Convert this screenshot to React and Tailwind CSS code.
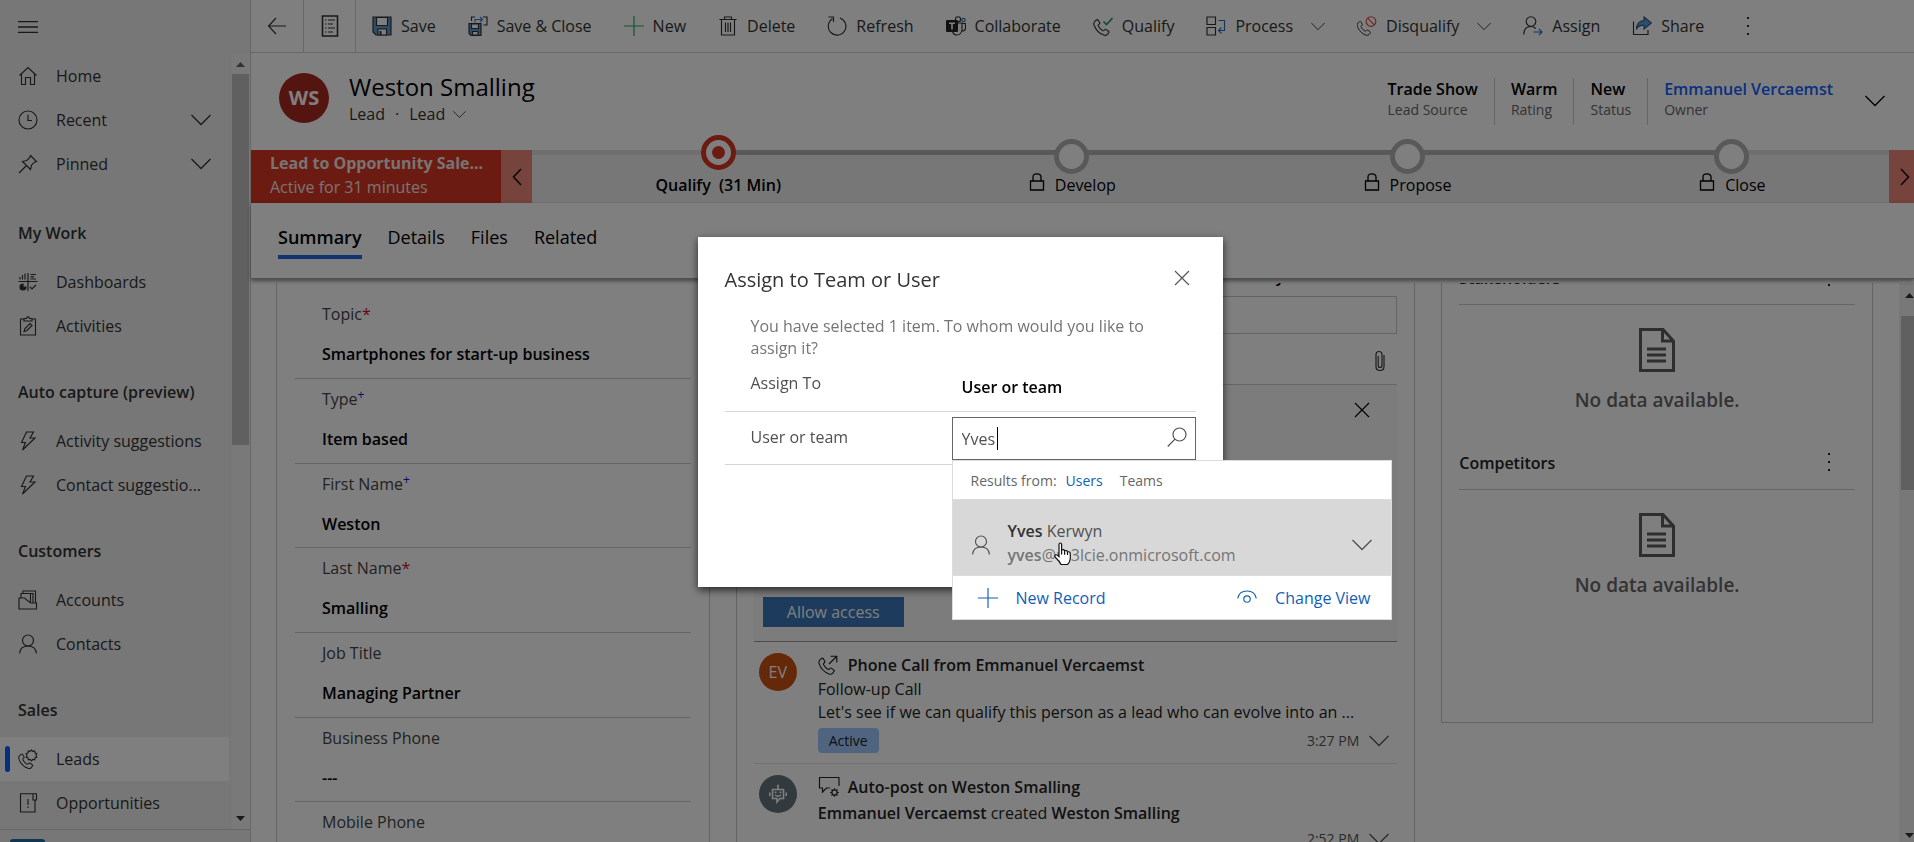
import React from "react";

function Icon({ children, size = 20, className = "", sw = 1.15, box = 20 }) {
  return (
    <svg
      width={size}
      height={size}
      viewBox={`0 0 ${box} ${box}`}
      fill="none"
      stroke="currentColor"
      strokeWidth={sw}
      className={`shrink-0 ${className}`}
      aria-hidden="true"
    >
      {children}
    </svg>
  );
}

const HANDSET =
  "M3.2 3.2 L5 1.8 Q5.8 1.4 6.4 2.2 L8 4.8 Q8.4 5.6 7.8 6.2 L6.8 7.2 Q6.4 7.8 6.8 8.6 Q8.4 11.6 11.2 13.2 Q12 13.6 12.6 13 L13.4 12.2 Q14.2 11.6 15 12.2 L17.4 14 Q18.2 14.6 17.6 15.4 L16.2 17.2 Q14.8 18.8 12.4 18 Q5 15.2 2.2 7.6 Q1.4 5 3.2 3.2 Z";

const icons = {
  home: (
    <Icon>
      <path d="M1.5 9.5 L10 1.5 L18.500 9.5 M3.500 8 V18.500 H7.500 V11.500 H12.500 V18.500 H16.500 V8" />
    </Icon>
  ),
  recent: (
    <Icon>
      <circle cx="10" cy="10" r="9" />
      <path d="M10 4.500 V10.500 H14" />
    </Icon>
  ),
  pinned: (
    <Icon>
      <path d="M12.500 1.500 L18.500 7.500 L16.500 8.200 L13.500 11.200 L12.500 15.500 L4.500 7.500 L8.800 6.500 L11.800 3.500 Z M8.500 11.500 L1 19" />
    </Icon>
  ),
  dashboards: (
    <Icon>
      <path d="M0.500 9.500 H19.500 M10 1 V19" />
      <path d="M2 7.500 V5 M4.500 7.500 V3 M7 7.500 V1.500 M12.500 2.500 H18 M12.500 4.800 H16 M12.500 7 H18" />
      <path d="M5 12 A3 3 0 1 0 8 15 H5 Z" fill="currentColor" />
      <path d="M12 15 L14 17 L18 13" />
    </Icon>
  ),
  activities: (
    <Icon>
      <path d="M6 3 H2.500 V19 H17.500 V3 H14 M6 5 V2.500 H8.500 Q8.500 0.800 10 0.800 Q11.500 0.800 11.500 2.500 H14 V5 Z" />
      <path d="M6 15.500 L7 12.500 L12 7.500 L14 9.500 L9 14.500 Z" />
    </Icon>
  ),
  bolt: (
    <Icon>
      <path d="M8.500 1 H15.500 L12 7 H17 L4.500 19 L7.500 11.500 H3.500 Z" />
    </Icon>
  ),
  accounts: (
    <Icon>
      <path d="M1 19 V8 H6.500 L12.500 13 H18.500 V19 Z M3 8 V3.500 H15 V12.500 M5 3.500 V1 H17.500 V13 M12.500 3.500 V12" />
    </Icon>
  ),
  person: (
    <Icon>
      <circle cx="10" cy="6.500" r="5.500" />
      <path d="M1.500 19.500 Q2.200 12 10 12 Q17.800 12 18.500 19.500" />
    </Icon>
  ),
  leads: (
    <Icon>
      <g transform="translate(-1 3.5) scale(0.88)">
        <path d={HANDSET} />
      </g>
      <path d="M13.500 1 L14.800 2.400 L16.700 2 L17 3.900 L18.800 4.700 L17.900 6.400 L18.800 8.100 L17 8.900 L16.700 10.800 L14.800 10.400 L13.500 11.800 L12.200 10.400 L10.300 10.800 L10 8.900 L8.200 8.100 L9.100 6.400 L8.200 4.700 L10 3.900 L10.300 2 L12.200 2.400 Z" />
    </Icon>
  ),
  opportunities: (
    <Icon>
      <path d="M15 0.700 H2.500 V19 H17 V7.500 M15 0.700 V7 H18.500 V0.700 Z M10 6 V12 M10 13.500 V15" />
    </Icon>
  ),
  save: (
    <Icon>
      <path d="M1 1 H19 V19 H4 L1 16 Z" fill="#5b9bd5" />
      <path d="M4.500 1.500 H15.500 V9.500 H4.500 Z" fill="#fff" />
      <path d="M6 19 V13 H14.500 V19 Z" fill="#fff" />
      <path d="M8.500 15 V19" strokeWidth="2" />
    </Icon>
  ),
  saveClose: (
    <Icon>
      <path d="M1 7.500 H13 V19.500 H3 L1 17.500 Z" fill="#5b9bd5" />
      <path d="M3.500 8 H10.500 V12.500 H3.500 Z M4.500 19 V15.500 H10 V19 Z" fill="#fff" />
      <path d="M3.500 5 V1 H7 M15 1 H19 V9 H15.500" />
      <path d="M7 6.500 V3.500 H14 M12 1 L14.500 3.500 L12 6" stroke="#2b7cd3" />
    </Icon>
  ),
  plus: (
    <Icon>
      <path d="M10 0 V20 M0 10 H20" />
    </Icon>
  ),
  trash: (
    <Icon>
      <path d="M1.500 3.500 H18.500 M6.500 3.500 V1 H13.500 V3.500 M3.500 3.500 V19 H16.500 V3.500 M7.500 6.500 V16 M10 6.500 V16 M12.500 6.500 V16" />
    </Icon>
  ),
  refresh: (
    <Icon>
      <path d="M5.500 2.800 A8.800 8.800 0 1 0 13 2 M1.500 1 H6.500 V6" />
    </Icon>
  ),
  teams: (
    <Icon>
      <circle cx="12" cy="3.300" r="2.600" />
      <circle cx="17.500" cy="4" r="1.700" stroke="#2b6ca8" />
      <path d="M9 7 H16 V14 Q15 19 11 19 Q7.500 19 6.500 15.500 M16 7.500 H19.500 V12.500 Q19 15 16 15" />
      <rect x="0" y="4" width="12" height="12" rx="1" fill="#222" stroke="none" />
      <path d="M3 7.200 H9 M6 7.200 V13.500" stroke="#fff" strokeWidth="1.600" />
    </Icon>
  ),
  qualify: (
    <Icon>
      <g transform="translate(-1 2) scale(0.95)">
        <path d={HANDSET} />
      </g>
      <path d="M10.500 5.500 L13.500 8.500 L19.500 2" stroke="#1e9e54" strokeWidth="1.600" />
    </Icon>
  ),
  process: (
    <Icon>
      <path d="M1 1 H9.500 V8.500 H1 Z M1 11.500 H9.500 V19 H1 Z" />
      <path d="M12.500 4.500 H18.500 V14.500 H12.500 M15.500 11.500 L12.500 14.500 L15.500 17.500" stroke="#2b6cb8" />
    </Icon>
  ),
  disqualify: (
    <Icon>
      <g transform="translate(-1.5 4) scale(0.84)">
        <path d={HANDSET} />
      </g>
      <circle cx="14" cy="5.500" r="4.800" stroke="#e04848" />
      <path d="M10.800 2.200 L17.200 8.800" stroke="#e04848" />
    </Icon>
  ),
  assign: (
    <Icon>
      <circle cx="8" cy="5.500" r="4.800" />
      <path d="M0.700 18.500 Q1 10.500 8 10.500 Q11 10.500 12.800 12.500" />
      <path d="M10.500 16 H19 M15.800 12.800 L19 16 L15.800 19.200" stroke="#2b6cb8" />
    </Icon>
  ),
  share: (
    <Icon>
      <path d="M1.500 5.500 V18.500 H16 V14" />
      <path d="M12 1 L19.500 7 L12 13 V9.500 Q6 9 4.500 13.500 Q4.500 5 12 4.500 Z" fill="#5b9bd5" stroke="#2b5c8a" />
    </Icon>
  ),
  form: (
    <Icon size={22} box={22}>
      <path d="M3.500 1 H18.500 V21 H3.500 Z" strokeWidth="1.600" />
      <path d="M6 5 H7.500 M9 5 H16 M6 9 H7.500 M9 9 H14 M6 13 H7.500 M9 13 H16 M6 17 H7.500 M9 17 H14" />
    </Icon>
  ),
  back: (
    <Icon>
      <path d="M19 10 H1.500 M9 2 L1.500 10 L9 18" />
    </Icon>
  ),
  close: (
    <Icon size={16} box={16}>
      <path d="M1 1 L15 15 M15 1 L1 15" />
    </Icon>
  ),
  lock: (
    <Icon size={18} box={18} sw={1.300}>
      <path d="M2.500 8 H15.500 V17 H2.500 Z M5 8 V4 Q5 0.800 9 0.800 Q13 0.800 13 4 V8" />
    </Icon>
  ),
  phoneOut: (
    <Icon>
      <g transform="translate(-1 1.500) scale(0.97)">
        <path d={HANDSET} />
      </g>
      <path d="M11 9 L18.500 1.500 M12.500 1.200 H18.800 V7.500" />
    </Icon>
  ),
  autoPost: (
    <Icon size={22} box={22}>
      <path d="M12 12 H8.500 L4.500 16 V12 H1.500 V1.500 H21 V10" />
      <circle cx="16.500" cy="16.500" r="2.600" />
      <path d="M16.500 12.200 V14 M16.500 19 V20.800 M12.200 16.500 H14 M19 16.500 H20.800 M13.500 13.500 L14.700 14.700 M18.300 18.300 L19.500 19.500 M19.500 13.500 L18.300 14.700 M14.700 18.300 L13.500 19.500" />
    </Icon>
  ),
  bot: (
    <Icon size={20} sw={1.600}>
      <path d="M4.500 5.500 H15.500 V14.500 H12 L9 18 V14.500 H4.500 Z M10 5.500 V2 M1.800 8.500 V12 M18.200 8.500 V12 M7 11 Q10 13.500 13 11" />
      <path d="M7.500 7.500 V9.200 M12.500 7.500 V9.200" strokeWidth="2" />
      <circle cx="10" cy="1.500" r="1" fill="currentColor" stroke="none" />
    </Icon>
  ),
  clip: (
    <Icon size={22} box={22}>
      <path d="M15 5 V16.500 Q15 20.500 11 20.500 Q7 20.500 7 16.500 V4.500 Q7 1.500 10 1.500 Q13 1.500 13 4.500 V15.500 Q13 17.500 11 17.500 Q9.200 17.500 9.200 15.500 V6" />
    </Icon>
  ),
  search: (
    <Icon>
      <circle cx="12.500" cy="7.500" r="6.500" />
      <path d="M8 12.200 L0.700 19.500" />
    </Icon>
  ),
  eye: (
    <Icon>
      <path d="M0.700 10.500 Q2 3 10 3 Q18 3 19.300 10.500" />
      <circle cx="10" cy="11" r="3.200" />
    </Icon>
  ),
};

function Chevron({ className = "" }) {
  return (
    <svg viewBox="0 0 20 12" fill="none" stroke="currentColor" strokeWidth="1.300" className={`shrink-0 ${className}`} aria-hidden="true">
      <path d="M0.500 1 L10 10.500 L19.500 1" />
    </svg>
  );
}

function Dots() {
  return (
    <svg width="4" height="18" viewBox="0 0 4 18" fill="currentColor" aria-hidden="true">
      <rect x="1" y="0" width="2" height="2" />
      <rect x="1" y="8" width="2" height="2" />
      <rect x="1" y="16" width="2" height="2" />
    </svg>
  );
}

function DocIcon() {
  return (
    <svg width="38" height="46" viewBox="0 0 38 46" fill="none" stroke="#5c5c5c" strokeWidth="3" className="shrink-0" aria-hidden="true">
      <path d="M2.500 2.500 H25 L35.500 14 V43.500 H2.500 Z M24.500 2.500 V14 H35.500" />
      <path d="M9 22 H28 M9 28 H28 M9 34 H28" />
    </svg>
  );
}

function NavItem({ icon, label, expand, active }) {
  return (
    <li>
      <a
        href="#"
        className={`relative flex h-11 w-[229px] items-center pl-[18px] pr-[18px] ${active ? "bg-white" : ""}`}
      >
        {active && <span className="absolute left-[5px] h-[26px] w-[5px] rounded-sm bg-[#0b5fff]" />}
        {icons[icon]}
        <span className="ml-[18px] flex-1 whitespace-nowrap">{label}</span>
        {expand && <Chevron className="h-3 w-5" />}
      </a>
    </li>
  );
}

function NavGroup({ title, children }) {
  return (
    <section>
      <h2 className="h-[71px] pt-8 pl-[18px] leading-6 font-semibold whitespace-nowrap">{title}</h2>
      <ul>{children}</ul>
    </section>
  );
}

function Sidebar() {
  return (
    <nav className="flex w-[251px] shrink-0 flex-col border-r border-[#cfcfcf] bg-[#efefef] text-[#333]">
      <div className="flex h-[54px] shrink-0 items-center pl-[18px]">
        <button type="button" aria-label="Site map">
          <svg width="20" height="12" viewBox="0 0 20 12" stroke="currentColor" strokeWidth="1.300" aria-hidden="true">
            <path d="M0 0.700 H20 M0 6 H20 M0 11.300 H20" />
          </svg>
        </button>
      </div>
      <div className="flex min-h-0 flex-1">
        <div className="min-h-0 flex-1 overflow-hidden">
          <ul className="pb-[3px]">
            <NavItem icon="home" label="Home" />
            <NavItem icon="recent" label="Recent" expand />
            <NavItem icon="pinned" label="Pinned" expand />
          </ul>
          <NavGroup title="My Work">
            <NavItem icon="dashboards" label="Dashboards" />
            <NavItem icon="activities" label="Activities" />
          </NavGroup>
          <NavGroup title="Auto capture (preview)">
            <NavItem icon="bolt" label="Activity suggestions" />
            <NavItem icon="bolt" label="Contact suggestio..." />
          </NavGroup>
          <NavGroup title="Customers">
            <NavItem icon="accounts" label="Accounts" />
            <NavItem icon="person" label="Contacts" />
          </NavGroup>
          <NavGroup title="Sales">
            <NavItem icon="leads" label="Leads" active />
            <NavItem icon="opportunities" label="Opportunities" />
          </NavGroup>
        </div>
        <div className="flex w-[19px] shrink-0 flex-col items-center bg-[#f2f2f2] pt-2 pb-2">
          <svg width="9" height="5" viewBox="0 0 9 5" fill="#666" aria-hidden="true"><path d="M0 5 L4.500 0 L9 5 Z" /></svg>
          <div className="mt-[7px] h-[371px] w-[17px] bg-[#c1c1c1]" />
          <svg width="9" height="5" viewBox="0 0 9 5" fill="#333" className="mt-auto" aria-hidden="true"><path d="M0 0 L4.500 5 L9 0 Z" /></svg>
        </div>
      </div>
      <div className="flex h-[13px] shrink-0 items-end border-t border-[#cfcfcf] pl-[10px]">
        <div className="h-[3px] w-[35px] rounded-t-sm bg-[#1f6fa8]" />
      </div>
    </nav>
  );
}

function Command({ icon, label, tone = "", chevron }) {
  return (
    <button type="button" className="flex h-full items-center px-4 whitespace-nowrap">
      <span className={tone}>{icons[icon]}</span>
      <span className="ml-[9px]">{label}</span>
      {chevron && <Chevron className="ml-[18px] h-[9px] w-[14px]" />}
    </button>
  );
}

function CommandBar() {
  return (
    <div className="flex h-[53px] shrink-0 items-center border-b border-[#d0d0d0] text-[#333]">
      <button type="button" aria-label="Back" className="flex h-full w-[53px] items-center justify-center border-r border-[#d0d0d0]">{icons.back}</button>
      <button type="button" aria-label="Open record set" className="flex h-full w-[52px] items-center justify-center border-r border-[#d0d0d0]">{icons.form}</button>
      <Command icon="save" label="Save" />
      <Command icon="saveClose" label="Save & Close" />
      <Command icon="plus" label="New" tone="text-[#2aa65c]" />
      <Command icon="trash" label="Delete" />
      <Command icon="refresh" label="Refresh" />
      <Command icon="teams" label="Collaborate" />
      <Command icon="qualify" label="Qualify" />
      <Command icon="process" label="Process" chevron />
      <Command icon="disqualify" label="Disqualify" chevron />
      <Command icon="assign" label="Assign" />
      <Command icon="share" label="Share" />
      <button type="button" aria-label="More commands" className="ml-[26px]"><Dots /></button>
    </div>
  );
}

function HeaderField({ value, label, link }) {
  return (
    <div className="h-[47px] border-l border-[#ccc] px-4 first:border-l-0">
      <div className="leading-[22px] font-semibold text-black">
        {link ? <a href="#" className="text-[#1160ff]">{value}</a> : value}
      </div>
      <div className="text-sm leading-5 text-[#666]">{label}</div>
    </div>
  );
}

function RecordHeader() {
  return (
    <header className="flex h-[97px] shrink-0 items-start pl-7">
      <div className="mt-5 flex h-[50px] w-[50px] items-center justify-center rounded-full bg-[#a82a20] text-xl font-bold text-white">WS</div>
      <div className="mt-[18px] ml-5">
        <h1 className="text-2xl leading-[31px] font-medium text-black">Weston Smalling</h1>
        <div className="flex items-center leading-6 font-medium text-[#333]">
          <span>Lead</span>
          <span className="mx-[10px]">·</span>
          <span>Lead</span>
          <Chevron className="ml-2 h-[9px] w-[13px]" />
        </div>
      </div>
      <div className="mt-[25px] ml-auto flex">
        <HeaderField value="Trade Show" label="Lead Source" />
        <HeaderField value="Warm" label="Rating" />
        <HeaderField value="New" label="Status" />
        <HeaderField value="Emmanuel Vercaemst" label="Owner" link />
      </div>
      <button type="button" aria-label="Expand header" className="mt-[42px] mr-[29px] ml-4"><Chevron className="h-3 w-5" /></button>
    </header>
  );
}

function Stage({ label, active }) {
  return (
    <li className="flex flex-col items-center">
      {active ? (
        <span className="-mt-5 mb-[3px] flex h-[35px] w-[35px] items-center justify-center rounded-full border-[5px] border-[#d63623] bg-white">
          <span className="h-[13px] w-[13px] rounded-full bg-[#d63623]" />
        </span>
      ) : (
        <span className="-mt-4 -mb-px h-[35px] w-[35px] rounded-full border-[5px] border-[#b3b3b3] bg-white" />
      )}
      <span className={`flex leading-6 text-black ${active ? "font-semibold" : ""}`}>
        {!active && <span className="mr-[9px]">{icons.lock}</span>}
        <span className="whitespace-pre">{label}</span>
      </span>
    </li>
  );
}

function ProcessBar() {
  return (
    <div className="flex h-[53px] shrink-0">
      <button type="button" className="flex w-[250px] flex-col bg-[#d63623] pt-[2px] pl-[19px] text-left leading-6 whitespace-nowrap text-[#f4e6e4]">
        <span className="leading-[23px] font-bold">Lead to Opportunity Sale...</span>
        <span>Active for 31 minutes</span>
      </button>
      <button type="button" aria-label="Previous stage" className="flex w-[31px] items-center justify-center bg-[#ee867a]">
        <svg width="10" height="18" viewBox="0 0 10 18" fill="none" stroke="#111" strokeWidth="1.600" aria-hidden="true"><path d="M9 1 L1.500 9 L9 17" /></svg>
      </button>
      <div className="relative flex-1 border-t-[5px] border-[#dedede] bg-[#efefef]">
        <div className="absolute -top-[5px] right-[11.6%] left-[13.8%] h-[5px] bg-[#b3b3b3]" />
        <ol className="relative flex justify-around">
          <Stage label="Qualify  (31 Min)" active />
          <Stage label="Develop" />
          <Stage label="Propose" />
          <Stage label="Close" />
        </ol>
      </div>
      <button type="button" aria-label="Next stage" className="flex w-[25px] items-center justify-end bg-[#ee867a] pr-1">
        <svg width="10" height="18" viewBox="0 0 10 18" fill="none" stroke="#111" strokeWidth="1.600" aria-hidden="true"><path d="M1 1 L8.500 9 L1 17" /></svg>
      </button>
    </div>
  );
}

function Tabs() {
  return (
    <div role="tablist" className="relative z-10 flex h-[76px] shrink-0 items-start gap-[26px] border-b border-[#a0a0a0] bg-white pt-[18px] pl-[27px] text-lg leading-8 text-black shadow-[0_2px_4px_rgba(0,0,0,0.45)]">
      <button role="tab" type="button" aria-selected="true" className="border-b-4 border-[#2266e3] pb-[2px] font-semibold">Summary</button>
      <button role="tab" type="button">Details</button>
      <button role="tab" type="button">Files</button>
      <button role="tab" type="button">Related</button>
    </div>
  );
}

const fields = [
  { id: "topic", label: "Topic", mark: "*", value: "Smartphones for start-up business" },
  { id: "type", label: "Type", mark: "+", value: "Item based" },
  { id: "first", label: "First Name", mark: "+", value: "Weston" },
  { id: "last", label: "Last Name", mark: "*", value: "Smalling" },
  { id: "job", label: "Job Title", value: "Managing Partner" },
  { id: "bphone", label: "Business Phone", value: "---" },
  { id: "mphone", label: "Mobile Phone", value: "---" },
];

function ContactCard() {
  return (
    <section className="min-w-0 border-x border-[#c8c8c8] px-[18px] pt-[11px]">
      {fields.map((f) => (
        <div key={f.id} className="h-[85px] border-b border-[#ccc] pt-2 pl-[27px] nth-[3n]:h-[84px]">
          <label htmlFor={f.id} className="block leading-6 text-[#444]">
            {f.label}
            {f.mark === "*" && <span className="text-[#c8102e]">*</span>}
            {f.mark === "+" && <sup className="text-xs text-[#1010c8]">+</sup>}
          </label>
          <input id={f.id} defaultValue={f.value} className="mt-4 block h-6 w-full bg-transparent font-semibold text-black outline-none" />
        </div>
      ))}
    </section>
  );
}

function TimelineCard() {
  return (
    <section className="flex min-w-0 flex-col border-x border-[#c8c8c8] px-[17px]">
      <div className="h-[13px] shrink-0 overflow-hidden">
        <h3 className="-mt-[17px] pr-[113px] text-right leading-5 font-semibold text-black">Activity</h3>
      </div>
      <input aria-label="Search timeline" className="h-[38px] w-full shrink-0 border border-[#c8c8c8] bg-transparent outline-none" />
      <div className="flex h-[50px] shrink-0 items-center justify-end pt-4 pr-[6px] pb-3 text-[#333]">
        <button type="button" aria-label="Attach file">{icons.clip}</button>
      </div>
      <div className="flex h-[258px] shrink-0 flex-col border-t border-b border-t-[#ccc] border-b-[#999] bg-[#f9f9f9] pt-[17px]">
        <button type="button" aria-label="Dismiss" className="mr-[27px] self-end text-black">{icons.close}</button>
        <button type="button" className="mt-auto mb-[14px] ml-[9px] h-[30px] w-[141px] bg-[#3a76b8] text-white">Allow access</button>
      </div>
      <article className="flex h-[122px] shrink-0 border-b border-[#e4e4e4] pt-[11px] pl-[5px]">
        <div className="flex h-[38px] w-[38px] shrink-0 items-center justify-center rounded-full bg-[#ca5010] text-white">EV</div>
        <div className="ml-[21px] flex min-w-0 flex-1 flex-col text-[#222]">
          <h4 className="flex items-center gap-[10px] leading-6 font-semibold text-[#222]">{icons.phoneOut}Phone Call from Emmanuel Vercaemst</h4>
          <p className="leading-6">Follow-up Call</p>
          <p className="leading-[22px] whitespace-nowrap">Let's see if we can qualify this person as a lead who can evolve into an ...</p>
          <div className="flex items-center justify-between pt-[5px] pr-[8px]">
            <span className="flex h-[25px] w-[61px] items-center justify-center rounded-sm bg-[#a0c8ff] text-sm">Active</span>
            <button type="button" className="flex items-center gap-[10px] text-sm text-[#555]">3:27 PM<Chevron className="h-3 w-5" /></button>
          </div>
        </div>
      </article>
      <article className="flex shrink-0 pt-[11px] pl-[5px]">
        <div className="flex h-[38px] w-[38px] shrink-0 items-center justify-center rounded-full bg-[#64757c] text-white">{icons.bot}</div>
        <div className="ml-[21px] flex min-w-0 flex-1 flex-col text-[#222]">
          <h4 className="flex items-center gap-2 leading-6 font-semibold">{icons.autoPost}Auto-post on Weston Smalling</h4>
          <p className="leading-7"><strong className="font-semibold">Emmanuel Vercaemst</strong> created <strong className="font-semibold">Weston Smalling</strong></p>
          <button type="button" className="mt-[2px] mr-[8px] flex items-center gap-[10px] self-end text-sm text-[#555]">2:52 PM<Chevron className="h-3 w-5" /></button>
        </div>
      </article>
    </section>
  );
}

function EmptyPanel({ title }) {
  return (
    <div className="h-[185px]">
      <div className="flex h-[37px] items-start justify-between border-b border-[#ccc] pr-6">
        <h3 className="leading-5 font-semibold text-[#222]">{title}</h3>
        <button type="button" aria-label={`${title} options`} className="text-[#222]"><Dots /></button>
      </div>
      <div className="flex flex-col items-center pt-[22px]">
        <DocIcon />
        <p className="mt-[15px] text-[19px] leading-6 font-semibold text-[#666]">No data available.</p>
      </div>
    </div>
  );
}

function SideCard() {
  return (
    <section className="h-[440px] min-w-0 overflow-hidden border border-t-0 border-[#c8c8c8] px-[17px]">
      <div className="-mt-[15px]">
        <EmptyPanel title="Stakeholders" />
        <EmptyPanel title="Competitors" />
      </div>
    </section>
  );
}

function Cursor() {
  return (
    <svg width="20" height="24" viewBox="0 0 20 24" className="absolute top-[81px] left-[100px]" fill="#fff" stroke="#111" strokeWidth="1.200" aria-hidden="true">
      <path d="M6 14 V2.500 Q6 1 7.300 1 Q8.600 1 8.600 2.500 V8 Q11 6.800 11.600 8.800 Q14 7.800 14.500 10 Q17.300 9 17.300 12 V16.500 Q17 20 14.500 22.500 H8 Q6.500 19 2.500 15.500 Q1 13.500 2.800 12.800 Q4 12.500 6 14.500 Z M8.600 8 V12.500 M11.600 9 V12.800 M14.500 10 V13" />
    </svg>
  );
}

function LookupResults() {
  return (
    <div className="absolute top-[43px] left-0 w-[440px] border border-[#dcdcdc] bg-white">
      <div className="flex h-[39px] items-center border-b border-[#dcdcdc] pt-px pl-[18px] text-sm text-[#666]">
        <span>Results from:</span>
        <button type="button" className="ml-[9px] text-[#1160b7]">Users</button>
        <button type="button" className="ml-[17px]">Teams</button>
      </div>
      <button type="button" className="flex h-[75px] w-full items-center bg-[#d8d8d8] pt-[14px] pr-[19px] pl-[18px] text-left text-[#505050]">
        {icons.person}
        <span className="-mt-1 ml-[17px] flex-1 leading-6">
          <span className="block"><b className="font-semibold text-[#333]">Yves</b> Kerwyn</span>
          <span className="block text-[#757575]"><b className="font-semibold">yves</b>@m3lcie.onmicrosoft.com</span>
        </span>
        <Chevron className="h-3 w-5" />
      </button>
      <div className="flex h-11 items-center border-t border-[#dcdcdc] pr-5 pl-[25px] text-[#1160b7]">
        <button type="button" className="flex items-center gap-[18px]">{icons.plus}New Record</button>
        <button type="button" className="ml-auto flex items-center gap-[18px]">{icons.eye}Change View</button>
      </div>
      <Cursor />
    </div>
  );
}

function AssignDialog() {
  return (
    <div className="fixed inset-0 z-20 flex items-start justify-center bg-black/50 pt-[237px] pl-[6px]">
      <div role="dialog" aria-labelledby="dlg-title" className="h-[350px] w-[525px] bg-white px-[27px] shadow-[0_3px_8px_rgba(0,0,0,0.7)]">
        <div className="flex items-start justify-between pt-[29px]">
          <h2 id="dlg-title" className="text-xl leading-7 text-[#333]">Assign to Team or User</h2>
          <button type="button" aria-label="Close" className="mt-1 mr-[6px] text-[#555]">{icons.close}</button>
        </div>
        <p className="mt-[21px] pr-6 pl-[26px] leading-[22px] text-[#757575]">
          You have selected 1 item. To whom would you like to assign it?
        </p>
        <div className="mt-3 flex h-[41px] border-b border-[#d6d6d6] pl-[26px] text-[#505050]">
          <label htmlFor="assign-to" className="w-[211px] leading-6">Assign To</label>
          <select id="assign-to" className="mt-1 h-6 appearance-none bg-transparent font-semibold text-black">
            <option>User or team</option>
          </select>
        </div>
        <div className="flex h-[53px] border-b border-[#d6d6d6] pl-[26px] text-[#505050]">
          <label htmlFor="user-team" className="w-[201px] pt-[13px] leading-6">User or team</label>
          <div className="relative mt-[5px] h-[43px] flex-1">
            <input id="user-team" defaultValue="Yves" className="h-full w-full border border-[#666] bg-white pl-[9px] pr-10 outline-none" />
            <span className="absolute top-[10px] left-[45px] h-[23px] w-px bg-black" />
            <button type="button" aria-label="Search" className="absolute top-[10px] right-[9px]">{icons.search}</button>
            <LookupResults />
          </div>
        </div>
      </div>
    </div>
  );
}

export default function App() {
  return (
    <div className="flex h-screen overflow-hidden bg-white font-['Open_Sans','Noto_Sans',sans-serif] text-base">
      <Sidebar />
      <main className="flex min-w-0 flex-1 flex-col">
        <CommandBar />
        <RecordHeader />
        <ProcessBar />
        <Tabs />
        <div className="flex min-h-0 flex-1 pt-1">
          <div className="grid min-h-0 flex-1 grid-cols-[434fr_680fr_432fr] gap-[26px] overflow-hidden pr-[26px] pl-[25px]">
            <ContactCard />
            <TimelineCard />
            <SideCard />
          </div>
          <div className="flex w-[15px] shrink-0 flex-col items-end bg-[#f0f0f0] pt-[10px] pb-1">
            <svg width="9" height="5" viewBox="0 0 9 5" fill="#333" aria-hidden="true"><path d="M0 5 L4.500 0 L9 5 Z" /></svg>
            <div className="mt-[18px] h-[174px] w-[13px] bg-[#c1c1c1]" />
            <svg width="9" height="5" viewBox="0 0 9 5" fill="#333" className="mt-auto" aria-hidden="true"><path d="M0 0 L4.500 5 L9 0 Z" /></svg>
          </div>
        </div>
      </main>
      <AssignDialog />
    </div>
  );
}
